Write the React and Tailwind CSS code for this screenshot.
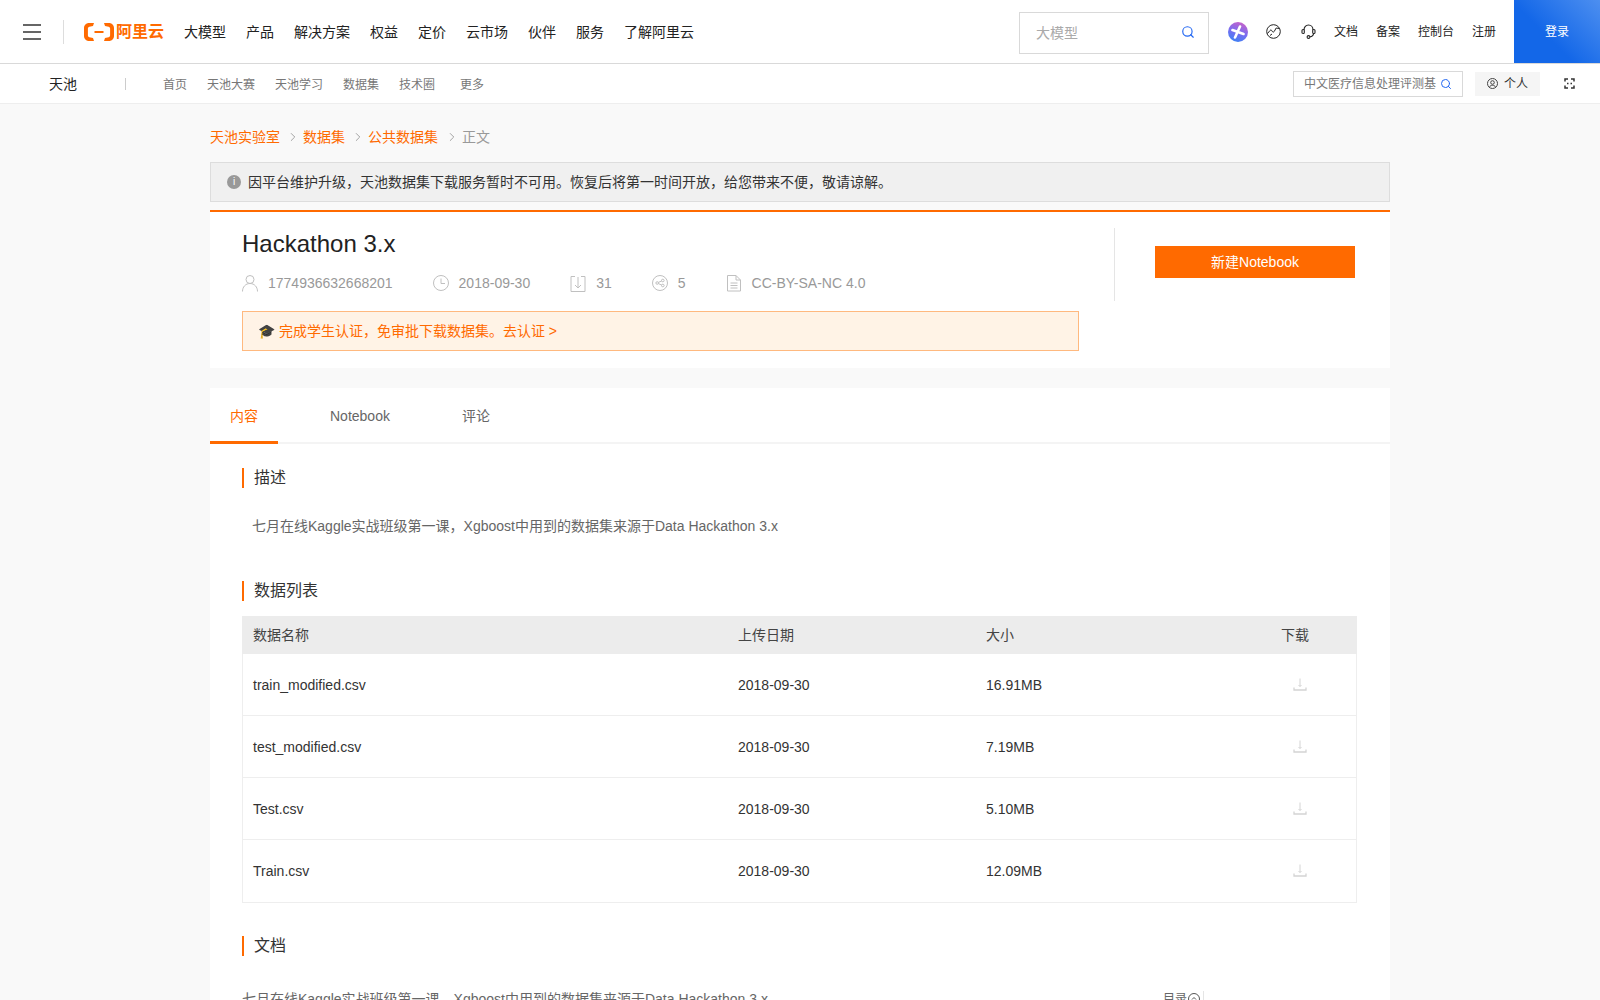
import React from "react";
import { Search, ChevronRight } from "lucide-react";

const nav = ["大模型", "产品", "解决方案", "权益", "定价", "云市场", "伙伴", "服务", "了解阿里云"];
const rows = [
  ["train_modified.csv", "2018-09-30", "16.91MB", "h-[61px]"],
  ["test_modified.csv", "2018-09-30", "7.19MB", "h-[62px]"],
  ["Test.csv", "2018-09-30", "5.10MB", "h-[62px]"],
  ["Train.csv", "2018-09-30", "12.09MB", "h-[63px]"],
];

function SectionTitle({ children }) {
  return (
    <div className="flex h-5 items-center border-l-2 border-[#ff6a00] pl-[10px] text-base leading-5 text-[#333]">
      {children}
    </div>
  );
}

function Download() {
  return (
    <svg width="14" height="14" viewBox="0 0 14 14" fill="none" stroke="#d4d4d4" strokeWidth="1">
      <path d="M7 0.500v8M5.500 7l1.500 1.500 1.500-1.500" />
      <path d="M1 9.500v2.500h12v-2.500" strokeWidth="1.300" />
    </svg>
  );
}

function MetaIcon({ kind }) {
  const s = { stroke: "#c0c0c0", strokeWidth: 1, fill: "none" };
  return (
    <svg width="16" height="18" viewBox="0 0 16 18" className="mr-[10px] shrink-0" {...s}>
      {kind === "user" && <path d="M8 1.500a4 4 0 1 1 0 8 4 4 0 0 1 0-8zM.5 17.500c0-4.500 3-8 7.500-8s7.500 3.500 7.500 8" />}
      {kind === "clock" && (
        <>
          <circle cx="8" cy="9" r="7.500" />
          <path d="M8 4.500V9.500h4" />
        </>
      )}
      {kind === "down" && <path d="M5 2.500H1v15h14v-15h-4M8 3v11M5 11l3 3 3-3" />}
      {kind === "share" && (
        <>
          <circle cx="8" cy="9" r="7.500" />
          <circle cx="5.200" cy="9" r="1.300" />
          <circle cx="10.800" cy="6.500" r="1.300" />
          <circle cx="10.800" cy="11.500" r="1.300" />
          <path d="M6.400 8.400 9.600 7M6.400 9.600 9.600 11" />
        </>
      )}
      {kind === "doc" && <path d="M1.500 1.500h8.500l4.500 4.500v11H1.500zM10 1.500V6h4.500M4.500 9h7M4.500 11.500h7M4.500 14h7" />}
    </svg>
  );
}

export default function App() {
  return (
    <div className="h-screen overflow-hidden bg-[#f9f9f9] font-[family-name:'Liberation_Sans','Noto_Sans_CJK_SC',sans-serif] text-[#333]">
      <header className="flex h-16 items-center border-b border-[#d9d9d9] bg-white">
        <div className="ml-[23px] flex w-[18px] flex-col gap-[5px]">
          <span className="h-[2px] bg-[#666]" />
          <span className="h-[2px] bg-[#666]" />
          <span className="h-[2px] bg-[#666]" />
        </div>
        <span className="ml-[22px] h-6 w-px bg-[#ddd]" />
        <div className="ml-5 flex items-center gap-[2px] text-[#ff6a00]">
          <svg width="30" height="18" viewBox="0 0 30 18" fill="#ff6a00">
            <path d="M10 0H5C2.200 0 0 2.200 0 5v8c0 2.800 2.200 5 5 5h5l-1-3-3.600-.8c-.9-.2-1.500-1-1.500-1.900V5.700c0-.9.600-1.700 1.500-1.900L9 3zM20 0h5c2.800 0 5 2.200 5 5v8c0 2.800-2.200 5-5 5h-5l1-3 3.600-.8c.9-.2 1.500-1 1.500-1.900V5.700c0-.9-.6-1.700-1.500-1.900L21 3zM10.500 8h9v2h-9z" />
          </svg>
          <span className="text-[16px] leading-5 font-bold">阿里云</span>
        </div>
        <nav className="ml-5 flex gap-5 text-sm text-[#222]">
          {nav.map((n) => (
            <span key={n}>{n}</span>
          ))}
        </nav>
        <div className="mt-[2px] ml-auto flex h-[42px] w-[190px] items-center justify-between border border-[#d9d9d9] pr-[13px] pl-4 text-sm text-[#aaa]">
          <span>大模型</span>
          <Search size={14} color="#2468f2" className="-mt-[2px]" />
        </div>
        <div className="ml-[19px] flex h-5 w-5 items-center justify-center rounded-full bg-[linear-gradient(200deg,#d85fc0,#7a6cf0_50%,#2f86f5)]">
          <svg width="14" height="14" viewBox="0 0 14 14" stroke="#fff" strokeWidth="2.600" strokeLinecap="round">
            <path d="M4 12.500 9 1.500M1.500 5l11 4" />
          </svg>
        </div>
        <svg className="ml-[18px]" width="15" height="15" viewBox="0 0 15 15" fill="none" stroke="#222" strokeWidth="1">
          <circle cx="7.500" cy="7.500" r="6.800" />
          <path d="M1.500 9.500 4 6.500c.8-.9 1.500-.6 2 .5s1.500 1.500 2.200.5l2-3.500 3 .5M4 11.500l2-1.500" />
        </svg>
        <svg className="ml-5" width="15" height="15" viewBox="0 0 15 15" fill="none" stroke="#222" strokeWidth="1.100">
          <path d="M3 6c0-3 2-5 4.500-5S12 3 12 6" />
          <rect x="1" y="5.500" width="2.300" height="4" rx="1.100" />
          <rect x="11.700" y="5.500" width="2.300" height="4" rx="1.100" />
          <path d="M12.500 9.500c0 2-1.500 3-3.500 3.300" />
          <circle cx="7.500" cy="13" r="1.400" />
        </svg>
        <div className="ml-[18px] flex gap-[18px] text-xs text-[#222]">
          <span>文档</span>
          <span>备案</span>
          <span>控制台</span>
          <span>注册</span>
        </div>
        <div className="ml-[18px] flex h-[63px] w-[86px] items-center justify-center self-start bg-[linear-gradient(225deg,#4d8ff0,#1367e8_60%)] text-xs text-white">
          登录
        </div>
      </header>

      <div className="flex h-10 items-center border-b border-[#eee] bg-white">
        <span className="ml-[49px] pt-px text-sm text-[#222]">天池</span>
        <span className="ml-[48px] h-3 w-px bg-[#ccc]" />
        <div className="ml-[37px] flex gap-5 pt-[2px] text-xs text-[#777]">
          <span>首页</span>
          <span>天池大赛</span>
          <span>天池学习</span>
          <span>数据集</span>
          <span>技术圈</span>
          <span className="ml-[5px]">更多</span>
        </div>
        <div className="ml-auto flex h-[26px] w-[170px] items-center justify-between border border-[#d9d9d9] px-[10px] text-xs text-[#777]">
          <span className="w-[132px] overflow-hidden pt-px whitespace-nowrap">中文医疗信息处理评测基</span>
          <Search size={12} color="#2468f2" />
        </div>
        <div className="ml-3 flex h-6 w-[65px] items-center justify-center gap-[6px] bg-[#f5f5f5] text-xs text-[#333]">
          <svg width="11" height="11" viewBox="0 0 11 11" fill="none" stroke="#444">
            <circle cx="5.500" cy="5.500" r="5" />
            <circle cx="5.500" cy="4.500" r="1.800" />
            <path d="M2.500 9.300c.5-1.500 1.500-2 3-2s2.500 .5 3 2" />
          </svg>
          <span className="pt-px">个人</span>
        </div>
        <svg className="mr-[25px] ml-6" width="11" height="11" viewBox="0 0 11 11" fill="none" stroke="#333" strokeWidth="1.500">
          <path d="M4 1H1v2.500M1 7.500V10h3M7 1h3v2.500M10 7.500V10H7M3 5.500h1.500M6.500 5.500H8" />
        </svg>
      </div>

      <main className="mx-auto w-[1180px]">
        <div className="flex h-[58px] items-center pt-2 text-sm text-[#999]">
          <span className="text-[#ff6a00]">天池实验室</span>
          <ChevronRight size={14} strokeWidth={1.300} className="mr-[3px] ml-[6px]" color="#888" />
          <span className="text-[#ff6a00]">数据集</span>
          <ChevronRight size={14} strokeWidth={1.300} className="mr-[3px] ml-[6px]" color="#888" />
          <span className="text-[#ff6a00]">公共数据集</span>
          <ChevronRight size={14} strokeWidth={1.300} className="mr-[3px] ml-[7px]" color="#888" />
          <span>正文</span>
        </div>

        <div className="flex h-10 items-center border border-[#ddd] bg-[#f0f0f0] pl-4 text-sm text-[#333]">
          <span className="mr-[7px] flex h-[14px] w-[14px] items-center justify-center rounded-full bg-[#999] text-[10px] leading-none text-white">
            i
          </span>
          因平台维护升级，天池数据集下载服务暂时不可用。恢复后将第一时间开放，给您带来不便，敬请谅解。
        </div>

        <section className="mt-2 flex h-[158px] border-t-2 border-[#ff6a00] bg-white">
          <div className="w-[904px] pl-8">
            <h1 className="mt-4 text-2xl leading-8 text-[#222]">Hackathon 3.x</h1>
            <div className="mt-[14px] flex h-[18px] items-center gap-10 text-sm text-[#999]">
              <span className="flex items-center"><MetaIcon kind="user" />1774936632668201</span>
              <span className="flex items-center"><MetaIcon kind="clock" />2018-09-30</span>
              <span className="flex items-center"><MetaIcon kind="down" />31</span>
              <span className="flex items-center"><MetaIcon kind="share" />5</span>
              <span className="flex items-center"><MetaIcon kind="doc" />CC-BY-SA-NC 4.0</span>
            </div>
            <div className="mt-[19px] flex h-10 w-[837px] items-center border border-[#ffb97f] bg-[#fff3e6] pl-[15px] text-sm text-[#ff6a00]">
              🎓 完成学生认证，免审批下载数据集。去认证 &gt;
            </div>
          </div>
          <div className="mt-4 flex h-[73px] flex-1 border-l border-[#e5e5e5] pl-10">
            <button className="mt-[18px] h-8 w-[200px] bg-[#ff6a00] text-sm text-white">新建Notebook</button>
          </div>
        </section>

        <section className="mt-5 h-[620px] bg-white">
          <div className="flex h-[56px] border-b-2 border-[#f4f4f4] text-sm text-[#666]">
            <div className="-mb-[2px] flex w-[68px] items-center justify-center border-b-[3px] border-[#ff6a00] pt-[2px] text-[#ff6a00]">内容</div>
            <div className="ml-[52px] flex items-center pt-[2px]">Notebook</div>
            <div className="ml-[72px] flex items-center pt-[2px]">评论</div>
          </div>
          <div className="px-8 pt-6">
            <SectionTitle>描述</SectionTitle>
            <p className="mt-[28px] pl-[10px] text-sm leading-5 text-[#666]">
              七月在线Kaggle实战班级第一课，Xgboost中用到的数据集来源于Data Hackathon 3.x
            </p>
            <div className="mt-[45px]">
              <SectionTitle>数据列表</SectionTitle>
            </div>
            <div className="mt-[15px] w-[1115px] text-sm">
              <div className="grid h-[38px] grid-cols-[485px_248px_295px_1fr] items-center bg-[#ececec] pl-[11px] text-[#444]">
                <span>数据名称</span>
                <span>上传日期</span>
                <span>大小</span>
                <span>下载</span>
              </div>
              <div className="border-x border-b border-[#eee]">
                {rows.map(([a, b, c, h], i) => (
                  <div key={a} className={`grid ${h} grid-cols-[485px_248px_295px_1fr] items-center pl-[10px] text-[#333] ${i ? "border-t border-[#eee]" : ""}`}>
                    <span>{a}</span>
                    <span>{b}</span>
                    <span>{c}</span>
                    <span className="flex pl-[12px]"><Download /></span>
                  </div>
                ))}
              </div>
            </div>
            <div className="mt-[33px]">
              <SectionTitle>文档</SectionTitle>
            </div>
            <div className="mt-[33px] flex w-[1115px] items-center text-sm text-[#666]">
              <span>七月在线Kaggle实战班级第一课，Xgboost中用到的数据集来源于Data Hackathon 3.x</span>
              <span className="mr-[153px] ml-auto flex items-center gap-px border-r border-[#e5e5e5] pr-[3px] text-xs">
                目录
                <svg width="12" height="12" viewBox="0 0 12 12" fill="none" stroke="#555">
                  <circle cx="6" cy="6" r="5.500" />
                  <path d="M4 6.500 6 4.500l2 2" />
                </svg>
              </span>
            </div>
          </div>
        </section>
      </main>
    </div>
  );
}
